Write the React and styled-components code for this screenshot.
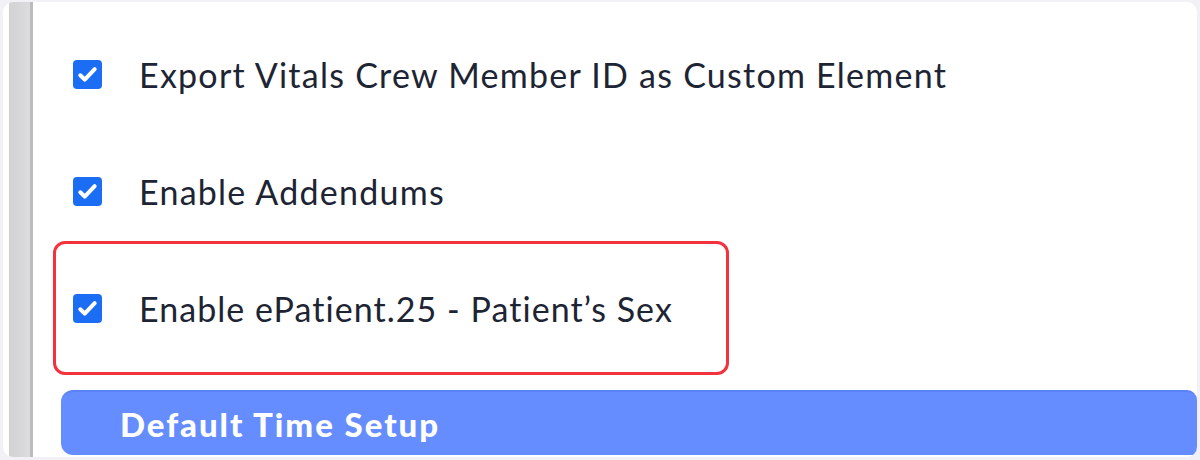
import React from "react";
import styled, { createGlobalStyle } from "styled-components";

const GlobalStyle = createGlobalStyle`
  html, body {
    margin: 0;
    padding: 0;
    background: #f1f1f6;
  }
  body {
    font-family: Lato, "Open Sans", sans-serif;
  }
`;

const Frame = styled.div`
  width: 1200px;
  height: 460px;
  box-sizing: border-box;
  padding: 2px 3px 3px 3px;
`;

const Card = styled.div`
  height: 100%;
  background: #fff;
  border-radius: 10px;
  display: flex;
  overflow: hidden;
`;

const Gutter = styled.div`
  width: 21px;
  margin-left: 6px;
  background: linear-gradient(90deg, #d2d2d4, #dcdcde);
  border-right: 3px solid #bcbcbe;
  flex-shrink: 0;
`;

const Content = styled.div`
  flex: 1;
  display: flex;
  flex-direction: column;
  padding: 42px 0 0 20px;
`;

const Option = styled.label`
  display: flex;
  align-items: center;
  height: 60px;
  margin-top: ${(p) => p.$gap || 0}px;
  padding-left: 20px;
  gap: 37px;
  font-size: 34px;
  color: #1d2433;
  letter-spacing: 1.25px;
`;

const Highlight = styled.div`
  width: 676px;
  box-sizing: border-box;
  margin-top: 20px;
  border: 3px solid #f2333f;
  border-radius: 12px;
  padding: 34px 0;

  ${Option} {
    padding-left: 17px;
    letter-spacing: 1.05px;
  }
`;

const Box = styled.span`
  width: 29px;
  height: 29px;
  border-radius: 4px;
  background: #1b6ef3;
  display: flex;
  align-items: center;
  justify-content: center;
  flex-shrink: 0;
`;

const SectionBar = styled.div`
  margin: 15px 0 0 8px;
  height: 65px;
  background: #668dff;
  border-top: 2px solid #5a82f7;
  box-sizing: border-box;
  border-radius: 12px 10px 0 12px;
  display: flex;
  align-items: center;
  padding-left: 59px;
  color: #fff;
  font-size: 33px;
  font-weight: 900;
  letter-spacing: 1.95px;
`;

const Check = () => (
  <Box>
    <svg width="23" height="23" viewBox="0 0 24 24" fill="none">
      <path
        d="M4.5 12.8l4.6 4.6L19.5 6.5"
        stroke="#fff"
        strokeWidth="4.2"
        strokeLinecap="round"
        strokeLinejoin="round"
      />
    </svg>
  </Box>
);

export default function App() {
  return (
    <>
      <GlobalStyle />
      <Frame>
        <Card>
          <Gutter />
          <Content>
            <Option>
              <Check />
              Export Vitals Crew Member ID as Custom Element
            </Option>
            <Option $gap={57}>
              <Check />
              Enable Addendums
            </Option>
            <Highlight>
              <Option>
                <Check />
                Enable ePatient.25 - Patient’s Sex
              </Option>
            </Highlight>
            <SectionBar>Default Time Setup</SectionBar>
          </Content>
        </Card>
      </Frame>
    </>
  );
}
